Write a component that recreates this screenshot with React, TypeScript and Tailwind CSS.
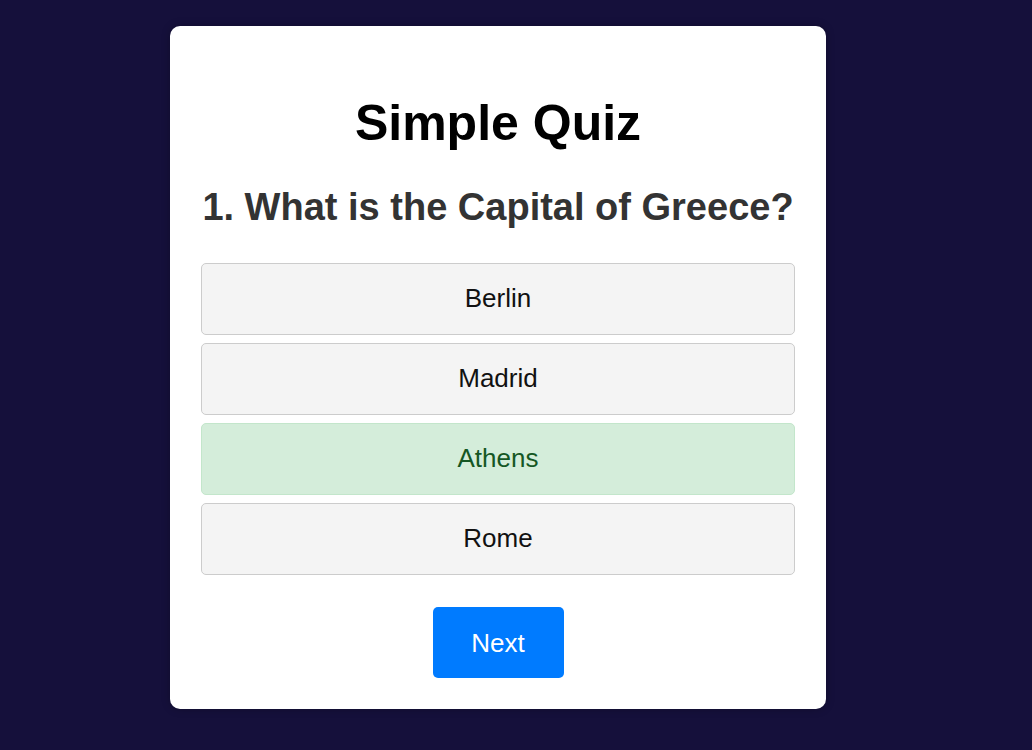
const options = [
  { label: "Berlin", correct: false },
  { label: "Madrid", correct: false },
  { label: "Athens", correct: true },
  { label: "Rome", correct: false },
];

export default function App() {
  return (
    <div
      className="flex min-h-[750px] w-full bg-[#15103b] pt-[26px] pl-[170px]"
      style={{ fontFamily: '"Liberation Sans", Arial, sans-serif' }}
    >
      <div className="flex h-[683px] w-[656px] flex-col rounded-[10px] bg-white px-[31px] pt-[72px] shadow-[0_0_8px_rgba(0,0,0,0.25)]">
        <h1 className="h-[50px] text-center text-[50px] leading-[50px] font-bold text-black">
          Simple Quiz
        </h1>

        <h2 className="mt-[40px] h-[38px] text-center text-[38px] leading-[38px] font-bold whitespace-nowrap text-[#333333]">
          1. What is the Capital of Greece?
        </h2>

        <div className="mt-[37px] flex flex-col gap-2">
          {options.map((opt) => (
            <div
              key={opt.label}
              className={
                opt.correct
                  ? "flex h-[72px] items-center justify-center rounded-[5px] border border-[#c3e6cb] bg-[#d4edda] pb-[3px] text-[26px] leading-none text-[#155724]"
                  : "flex h-[72px] items-center justify-center rounded-[5px] border border-[#cccccc] bg-[#f4f4f4] pb-[3px] text-[26px] leading-none text-[#111111]"
              }
            >
              {opt.label}
            </div>
          ))}
        </div>

        <div className="mt-8 flex justify-center">
          <button className="flex h-[71px] w-[131px] items-center justify-center rounded-[5px] bg-[#007bff] text-[26px] leading-none text-white">
            Next
          </button>
        </div>
      </div>
    </div>
  );
}
